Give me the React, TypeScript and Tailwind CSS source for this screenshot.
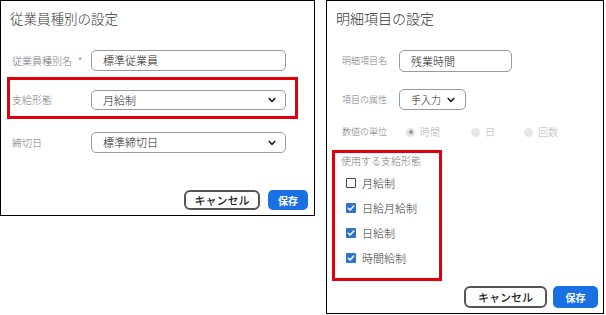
import React from "react";

const FONT = { fontFamily: '"Noto Sans CJK JP", "Noto Sans", sans-serif' };

function Chevron({ className = "" }: { className?: string }) {
  return (
    <svg className={className} width="8" height="6" viewBox="0 0 8 6" fill="none">
      <path d="M1.2 1.5 L4 4.3 L6.8 1.5" stroke="#222" strokeWidth="1.7" strokeLinecap="round" strokeLinejoin="round" />
    </svg>
  );
}

function Check({ checked, label }: { checked: boolean; label: string }) {
  return (
    <div className="flex h-[25px] items-center pl-[11px]">
      {checked ? (
        <div className="flex h-[10px] w-[10px] items-center justify-center rounded-[1px] bg-[#2f74c8]">
          <svg width="8" height="8" viewBox="0 0 8 8" fill="none">
            <path d="M1.3 4.2 L3.1 6 L6.7 2" stroke="white" strokeWidth="1.5" strokeLinecap="round" strokeLinejoin="round" />
          </svg>
        </div>
      ) : (
        <div className="h-[10px] w-[10px] rounded-[1px] border-[1.5px] border-[#444] bg-white" />
      )}
      <span className="ml-[6px] text-[11px] font-light leading-[14px] text-[#333]">{label}</span>
    </div>
  );
}

function Radio({ selected, label, width }: { selected?: boolean; label: string; width: number }) {
  return (
    <div className="flex items-center" style={{ width }}>
      <div className="flex h-[9px] w-[9px] items-center justify-center rounded-full bg-[#e6e6e6]">
        {selected && <div className="h-[4px] w-[4px] rounded-full bg-[#9a9a9a]" />}
      </div>
      <span className="ml-[5px] text-[10px] font-light leading-[14px] text-[#b5b5b5]">{label}</span>
    </div>
  );
}

export default function App() {
  return (
    <div className="flex h-[315px] w-[606px] items-start bg-white" style={FONT}>
      {/* Left panel */}
      <div className="flex h-[216px] w-[315px] flex-col border border-black">
        <div className="h-[27px] pl-[9px] pt-[7px] text-[13.5px] font-light leading-[20px] text-[#333]">従業員種別の設定</div>
        <div className="mt-[22px] flex items-center pl-[11px]">
          <div className="flex w-[79px] items-center text-[10px] font-light leading-[14px] text-[#777]">
            従業員種別名<span className="ml-[6px] text-[#e0445a]">*</span>
          </div>
          <div className="flex h-[21px] w-[195px] items-center rounded-[5px] border border-[#9a9a9a] pl-[11px] text-[11px] font-light text-[#222]">
            標準従業員
          </div>
        </div>
        <div className="ml-[6px] mt-[6px] flex h-[42px] w-[291px] items-start border-[3px] border-[#e0000b] pl-[2px] pt-[10px]">
          <div className="flex h-[20px] w-[79px] items-center text-[10px] font-light leading-[14px] text-[#777]">支給形態</div>
          <div className="flex h-[20px] w-[195px] items-center justify-between rounded-[5px] border border-[#9a9a9a] pl-[11px] pr-[9px] text-[11px] font-light text-[#222]">
            月給制
            <Chevron />
          </div>
        </div>
        <div className="mt-[13px] flex items-center pl-[11px]">
          <div className="w-[79px] text-[10px] font-light leading-[14px] text-[#777]">締切日</div>
          <div className="flex h-[21px] w-[195px] items-center justify-between rounded-[5px] border border-[#9a9a9a] pl-[11px] pr-[9px] text-[11px] font-light text-[#222]">
            標準締切日
            <Chevron />
          </div>
        </div>
        <div className="mt-[37px] flex justify-end gap-[8px] pr-[6px]">
          <div className="flex h-[20px] w-[76px] items-center justify-center rounded-[6px] border-2 border-[#555] text-[11px] font-medium text-[#222]">
            キャンセル
          </div>
          <div className="flex h-[20px] w-[40px] items-center justify-center rounded-[5px] bg-[#1a6fe3] text-[10px] font-bold text-white">
            保存
          </div>
        </div>
      </div>

      {/* Right panel */}
      <div className="ml-[11px] flex h-[314px] w-[278px] flex-col border border-black">
        <div className="h-[27px] pl-[9px] pt-[7px] text-[14px] font-light leading-[20px] text-[#333]">明細項目の設定</div>
        <div className="mt-[22px] flex items-center pl-[15px]">
          <div className="w-[57px] text-[9px] font-light leading-[14px] text-[#777]">明細項目名</div>
          <div className="flex h-[22px] w-[113px] items-center rounded-[5px] border border-[#9a9a9a] pl-[11px] text-[11px] font-light text-[#222]">
            残業時間
          </div>
        </div>
        <div className="mt-[17px] flex items-center pl-[15px]">
          <div className="w-[57px] text-[9px] font-light leading-[14px] text-[#777]">項目の属性</div>
          <div className="flex h-[21px] w-[67px] items-center rounded-[5px] border border-[#9a9a9a] pl-[11px] text-[10px] font-light text-[#222]">
            手入力
            <Chevron className="ml-[6px]" />
          </div>
        </div>
        <div className="mt-[15px] flex h-[14px] items-center pl-[15px]">
          <div className="w-[64px] text-[9px] font-light leading-[14px] text-[#777]">数値の単位</div>
          <Radio selected label="時間" width={65} />
          <Radio label="日" width={53} />
          <Radio label="回数" width={50} />
        </div>
        <div className="ml-[5px] mt-[11px] flex h-[131px] w-[110px] flex-col border-[3px] border-[#e0000b]">
          <div className="pl-[6px] pt-[1px] text-[10px] font-light leading-[14px] text-[#777]">使用する支給形態</div>
          <div className="mt-[2px]">
            <Check checked={false} label="月給制" />
            <Check checked label="日給月給制" />
            <Check checked label="日給制" />
            <Check checked label="時間給制" />
          </div>
        </div>
        <div className="mt-[5px] flex justify-end gap-[6px] pr-[5px]">
          <div className="flex h-[22px] w-[83px] items-center justify-center rounded-[6px] border-2 border-[#555] text-[11px] font-medium text-[#222]">
            キャンセル
          </div>
          <div className="flex h-[22px] w-[45px] items-center justify-center rounded-[5px] bg-[#1a6fe3] text-[10px] font-bold text-white">
            保存
          </div>
        </div>
      </div>
    </div>
  );
}
